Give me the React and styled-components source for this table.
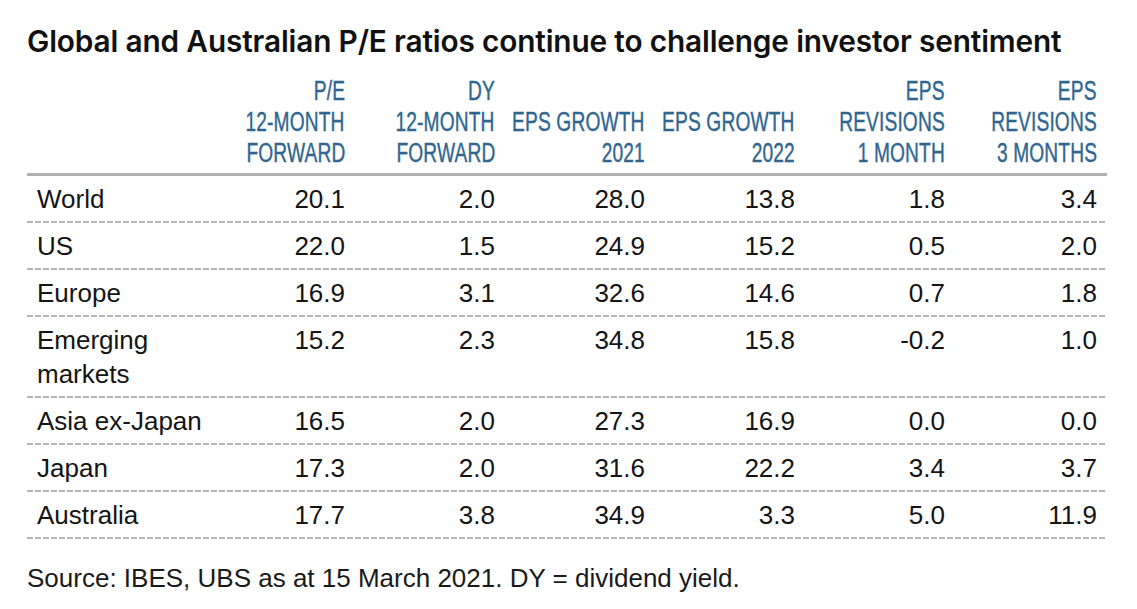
import styled, { createGlobalStyle } from "styled-components";

const GlobalStyle = createGlobalStyle`
  html, body {
    margin: 0;
    padding: 0;
    background: #ffffff;
  }
`;

const columns = [
  ["P/E", "12-MONTH", "FORWARD"],
  ["DY", "12-MONTH", "FORWARD"],
  ["EPS GROWTH", "2021"],
  ["EPS GROWTH", "2022"],
  ["EPS", "REVISIONS", "1 MONTH"],
  ["EPS", "REVISIONS", "3 MONTHS"],
];

const rows = [
  { name: ["World"], values: ["20.1", "2.0", "28.0", "13.8", "1.8", "3.4"] },
  { name: ["US"], values: ["22.0", "1.5", "24.9", "15.2", "0.5", "2.0"] },
  { name: ["Europe"], values: ["16.9", "3.1", "32.6", "14.6", "0.7", "1.8"] },
  {
    name: ["Emerging", "markets"],
    values: ["15.2", "2.3", "34.8", "15.8", "-0.2", "1.0"],
  },
  {
    name: ["Asia ex-Japan"],
    values: ["16.5", "2.0", "27.3", "16.9", "0.0", "0.0"],
  },
  { name: ["Japan"], values: ["17.3", "2.0", "31.6", "22.2", "3.4", "3.7"] },
  {
    name: ["Australia"],
    values: ["17.7", "3.8", "34.9", "3.3", "5.0", "11.9"],
  },
];

const App = () => {
  return (
    <Page>
      <GlobalStyle />
      <Title>Global and Australian P/E ratios continue to challenge investor sentiment</Title>
      <Table>
        <HeaderRow>
          <HeaderCell />
          {columns.map((lines, i) => (
            <HeaderCell key={i}>
              {lines.map((line) => (
                <HeaderLine key={line}>{line}</HeaderLine>
              ))}
            </HeaderCell>
          ))}
        </HeaderRow>
        {rows.map((row) => (
          <BodyRow key={row.name.join(" ")}>
            <LabelCell>
              {row.name.map((part) => (
                <div key={part}>{part}</div>
              ))}
            </LabelCell>
            {row.values.map((v, i) => (
              <ValueCell key={i}>{v}</ValueCell>
            ))}
          </BodyRow>
        ))}
      </Table>
      <Source>Source: IBES, UBS as at 15 March 2021. DY = dividend yield.</Source>
    </Page>
  );
};

export default App;

const Page = styled.div`
  padding: 23px 0 0 27px;
  width: 1137px;
  box-sizing: border-box;
`;

const Title = styled.h1`
  margin: 0 0 17px;
  font-family: Inter, "Noto Sans", sans-serif;
  font-weight: 600;
  font-size: 29.8px;
  line-height: 36px;
  color: #111111;
  letter-spacing: -0.15px;
  white-space: nowrap;
`;

const Table = styled.div`
  width: 1080px;
  display: flex;
  flex-direction: column;
`;

const gridCols = `178px repeat(5, 150px) 152px`;

const HeaderRow = styled.div`
  display: grid;
  grid-template-columns: ${gridCols};
  align-items: end;
  padding-bottom: 4px;
  border-bottom: 3px solid #b2b2b2;
`;

const HeaderCell = styled.div`
  display: flex;
  flex-direction: column;
  align-items: flex-end;
  padding-right: 10px;
`;

/* no condensed face installed, so squeeze the regular one */
const HeaderLine = styled.span`
  display: inline-block;
  font-family: "Liberation Sans", Arial, sans-serif;
  font-size: 27px;
  line-height: 31px;
  letter-spacing: 0.2px;
  color: #2f6690;
  white-space: nowrap;
  -webkit-text-stroke: 0.4px #2f6690;
  transform: scaleX(0.71);
  transform-origin: right center;
`;

const BodyRow = styled.div`
  display: grid;
  grid-template-columns: ${gridCols};
  align-items: start;
  padding: 6px 0 7px;
  background-image: repeating-linear-gradient(
    90deg,
    #b4b4b4 0 6px,
    transparent 6px 8px
  );
  background-size: 100% 2px;
  background-position: left bottom;
  background-repeat: no-repeat;
  font-family: "Liberation Sans", Arial, sans-serif;
  font-size: 26px;
  line-height: 34px;
  color: #141414;
`;

const LabelCell = styled.div`
  padding-left: 10px;
`;

const ValueCell = styled.div`
  text-align: right;
  padding-right: 10px;
`;

const Source = styled.p`
  margin: 22px 0 0;
  font-family: "Liberation Sans", Arial, sans-serif;
  font-size: 26px;
  line-height: 34px;
  color: #1a1a1a;
`;
